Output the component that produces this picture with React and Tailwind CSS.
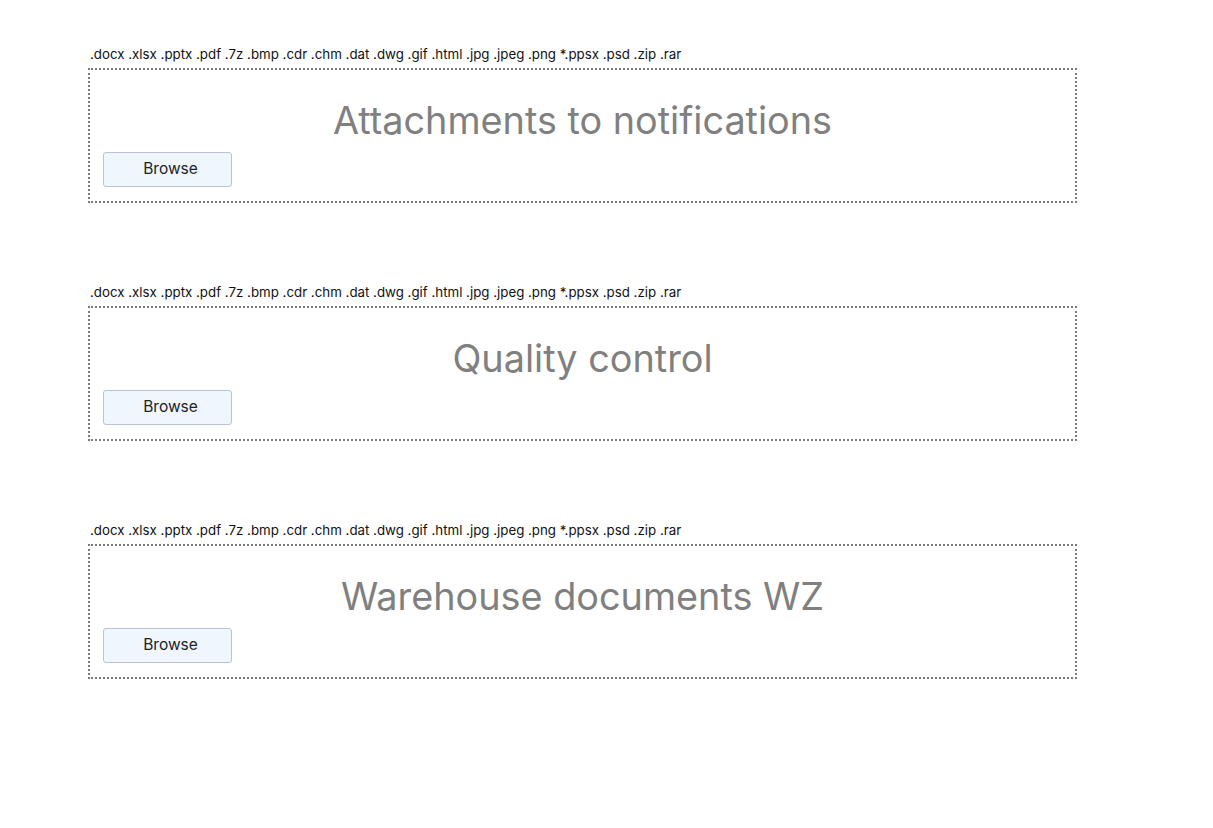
import React from "react";

const EXT = ".docx .xlsx .pptx .pdf .7z .bmp .cdr .chm .dat .dwg .gif .html .jpg .jpeg .png *.ppsx .psd .zip .rar";

function Section({ title, first }) {
  return (
    <div className={first ? "" : "mt-[77px]"}>
      <div className="mb-[2px] pl-[2px] text-[13.3px] leading-[24px] text-[#111]">{EXT}</div>
      <div className="h-[135px] w-[989px] border-2 border-dotted border-[#7a7a7a] px-[13px] pt-[28px]">
        <div className="text-center text-[37.8px] leading-[44px] text-[#808080]">{title}</div>
        <button className="mt-[10px] h-[35px] w-[129px] rounded-[3px] border border-[#b8c4d4] bg-[#eff6fe] pb-[2px] pl-[6px] text-[15.5px] text-[#222]">
          Browse
        </button>
      </div>
    </div>
  );
}

export default function App() {
  return (
    <div className="min-h-[828px] bg-white pl-[88px] pt-[42px]" style={{ fontFamily: "Inter, 'Noto Sans', sans-serif" }}>
      <Section title="Attachments to notifications" first />
      <Section title="Quality control" />
      <Section title="Warehouse documents WZ" />
    </div>
  );
}
